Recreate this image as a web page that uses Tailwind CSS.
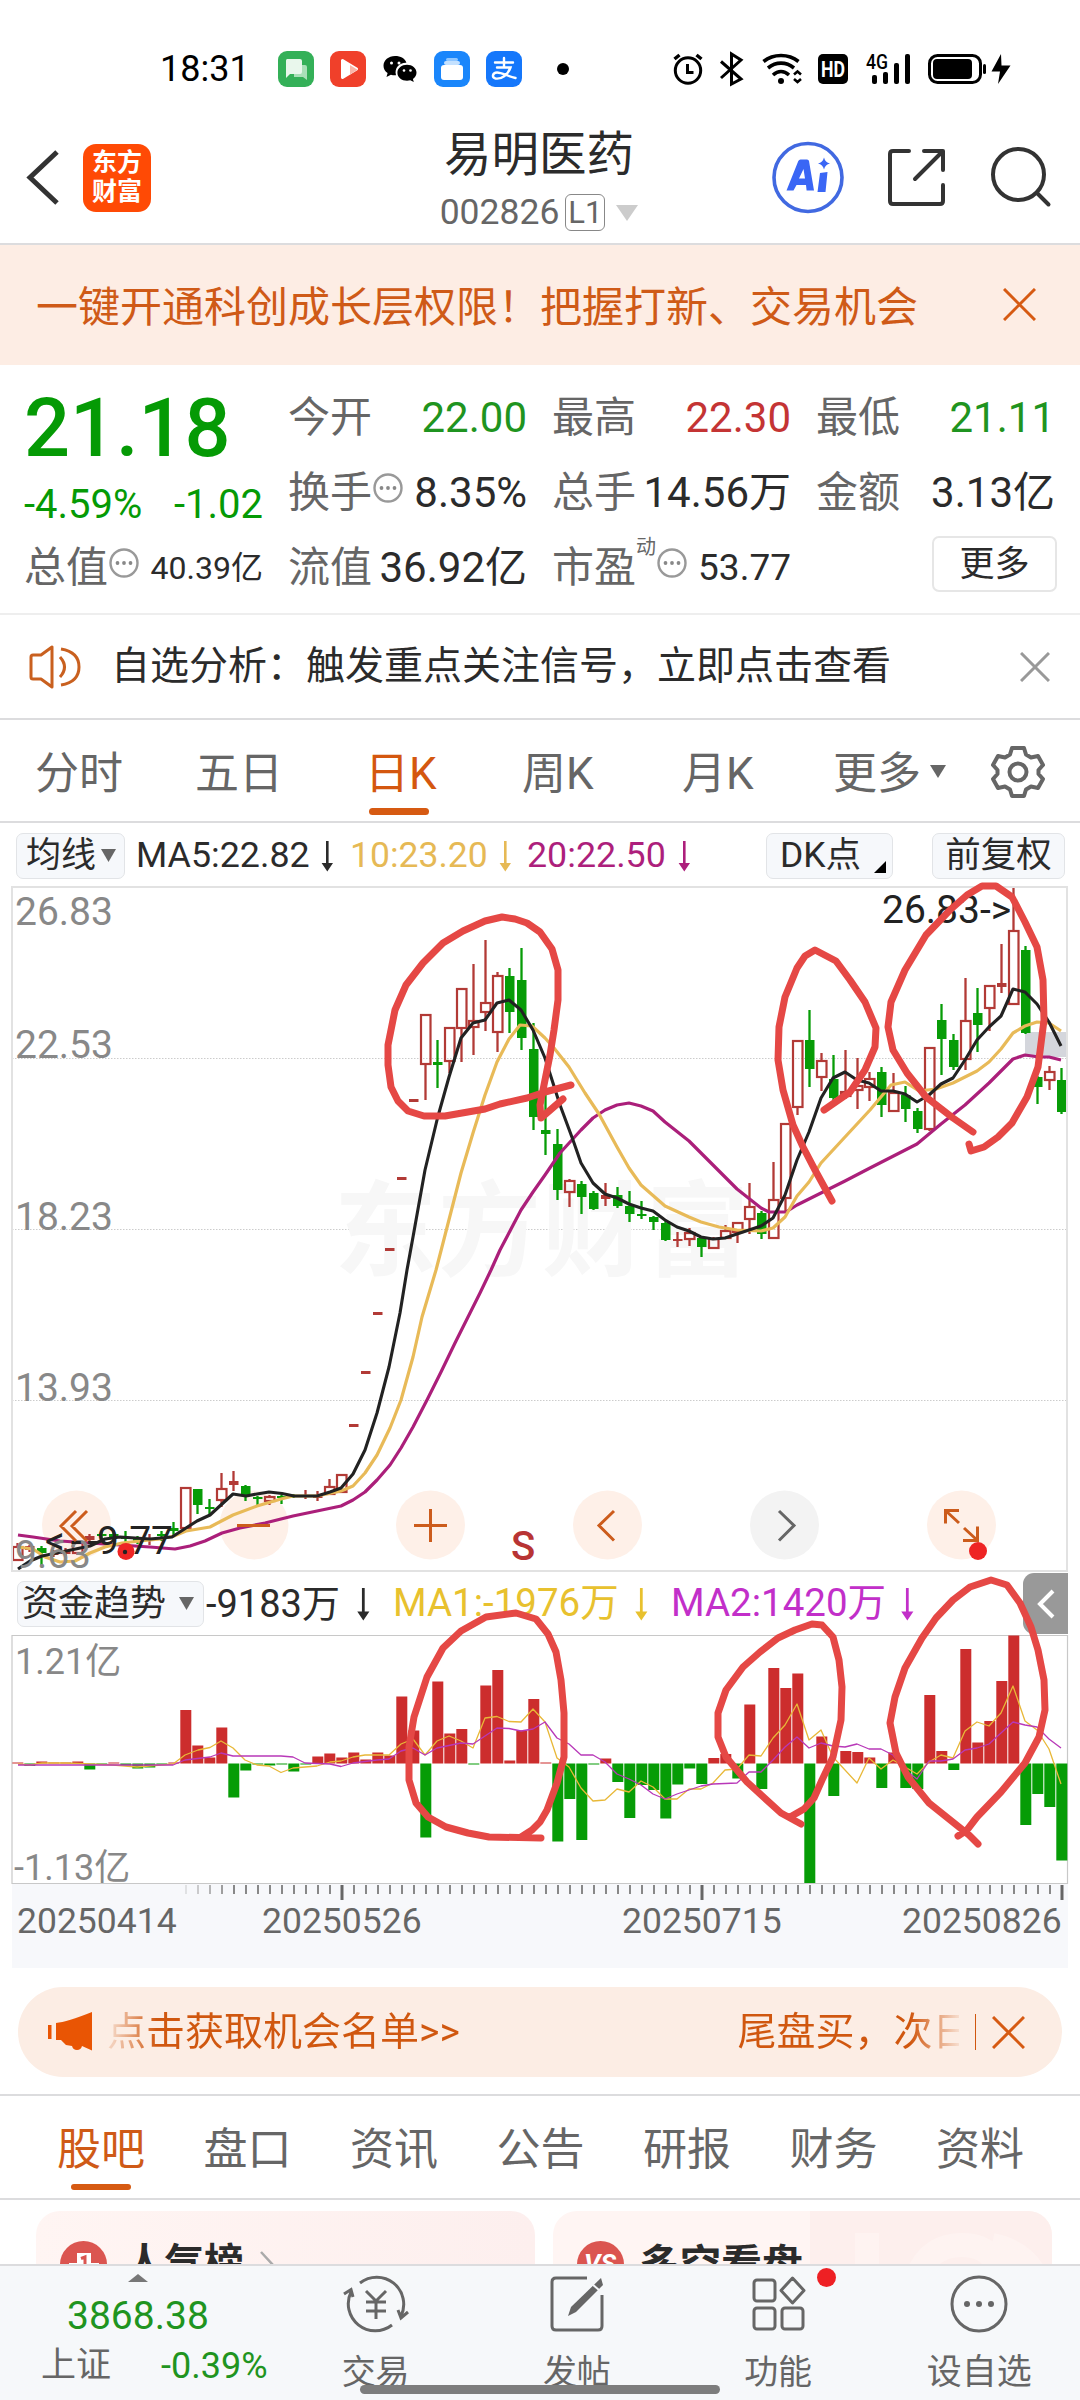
<!DOCTYPE html>
<html lang="zh-CN">
<head>
<meta charset="UTF-8">
<meta name="viewport" content="width=device-width, initial-scale=1.0">
<title>易明医药 002826</title>
<script src="https://cdn.jsdelivr.net/npm/@tailwindcss/browser@4"></script>
</head>
<body class="w-[1080px] h-[2400px] overflow-hidden bg-white font-[Roboto,'Noto_Sans_CJK_SC',sans-serif] text-[#2b2b2b] leading-none">
<div class="w-[1080px] h-[2400px] flex flex-col overflow-hidden whitespace-nowrap">

  <!-- status bar -->
  <div class="h-[138px] shrink-0 flex items-center pl-[160px] text-black">
    <span class="text-[36px] w-[118px]">18:31</span>
    <div class="flex items-center gap-[16px]">
      <svg class="w-9 h-9" viewBox="0 0 36 36"><rect width="36" height="36" rx="9" fill="#34b058"/><path d="M16 14h11a2 2 0 0 1 2 2v13l-4-3h-9z" fill="#a9e0b8"/><path d="M9 8h13a2 2 0 0 1 2 2v11a2 2 0 0 1-2 2H12l-4 4V10a2 2 0 0 1 1-2z" fill="#e9f7ec"/></svg>
      <svg class="w-9 h-9" viewBox="0 0 36 36"><rect width="36" height="36" rx="9" fill="#f0402a"/><path d="M11 9.500v17a1.500 1.500 0 0 0 2.300 1.300l14-8.500a1.500 1.500 0 0 0 0-2.600l-14-8.500A1.500 1.500 0 0 0 11 9.500z" fill="#fff"/><path d="M20 14l7.500 4.700-7.500 4.700z" fill="#f9b5a8"/></svg>
      <svg class="w-9 h-9" viewBox="0 0 36 36"><path d="M13 5C6.500 5 1.500 9.300 1.500 14.700c0 3 1.600 5.600 4.100 7.400L4.500 26l4.400-2.300c1.300.4 2.700.6 4.100.6h1c-2-8 4-13 10.400-12.600C23.300 7.700 18.700 5 13 5z"/><path d="M34.500 21.800c0-4.600-4.300-8-9.500-8s-9.600 3.400-9.600 8 4.300 8 9.600 8c1.200 0 2.300-.2 3.300-.5L31.800 31l-.9-3c2.200-1.500 3.600-3.700 3.600-6.200z"/><g fill="#fff"><circle cx="9.500" cy="12" r="1.500"/><circle cx="17" cy="12" r="1.500"/><circle cx="22" cy="19.500" r="1.300"/><circle cx="28.500" cy="19.500" r="1.300"/></g></svg>
      <svg class="w-9 h-9" viewBox="0 0 36 36"><rect width="36" height="36" rx="9" fill="#1a86fb"/><rect x="12" y="7" width="12" height="3" rx="1.500" fill="#8fc6ff"/><rect x="10" y="10" width="16" height="4" rx="2" fill="#c4e1ff"/><rect x="7" y="14" width="22" height="15" rx="3" fill="#fff"/></svg>
      <svg class="w-9 h-9" viewBox="0 0 36 36"><rect width="36" height="36" rx="9" fill="#1577fb"/><g fill="none" stroke="#fff" stroke-width="2.400" stroke-linecap="round"><path d="M9 11.500h18M18 7v9M11 16.500h13.500C22 24 15 28.500 9.500 27.500c-4-1-3-6 1.500-6 5 0 11 4 18.500 5.500"/></g></svg>
      <svg class="ml-[3px] w-9 h-9" viewBox="0 0 36 36"><circle cx="22" cy="18" r="6"/></svg>
    </div>
    <svg class="ml-[93px] w-[350px] h-[40px]" viewBox="670 49 350 40">
      <g fill="none" stroke="#000">
        <circle cx="688" cy="70.500" r="12.700" stroke-width="3"/>
        <path d="M687.500 64v8.500h6" stroke-width="3"/>
        <path d="M674.500 59l5-4M696.500 55l5 4" stroke-width="3.500"/>
        <path d="M721 61.500l20 17.500-9.500 5V54l9.500 6-20 18" stroke-width="3"/>
        <path d="M763.500 61.500c10-8 25-8 35 0M768 68c8-6.500 18-6.500 26 0M773 75c5-4.500 11-4.500 16 0" stroke-width="3.600"/>
        <path d="M794 74.500l3.500-3 3.500 3M794 79l3.500 3 3.500-3" stroke-width="2.600"/>
      </g>
      <circle cx="781" cy="81" r="3"/>
      <rect x="818" y="54" width="30" height="30" rx="5"/>
      <text x="833" y="76.500" text-anchor="middle" font-size="22" font-weight="700" textLength="24" lengthAdjust="spacingAndGlyphs" fill="#fff">HD</text>
      <text x="866" y="69" font-size="20" font-weight="500" textLength="22" lengthAdjust="spacingAndGlyphs">4G</text>
      <g><rect x="872" y="75" width="5" height="9" rx="2"/><rect x="883" y="72" width="5" height="12" rx="2"/><rect x="894" y="63" width="5" height="21" rx="2"/><rect x="905" y="54" width="5" height="30" rx="2"/></g>
      <rect x="929.500" y="55.500" width="51" height="27" rx="8" fill="none" stroke="#000" stroke-width="3"/>
      <rect x="933" y="59" width="39" height="20" rx="4"/>
      <rect x="983" y="64" width="3" height="10" rx="1.500"/>
      <path d="M1001 54l-9.500 17.500h8.500l-2 12.500 12.500-18.500h-9z"/>
    </svg>
  </div>

  <!-- title bar -->
  <div class="h-[107px] shrink-0 flex items-start border-b-2 border-[#dcdcde]">
    <svg class="ml-[24px] mt-[10px] w-[40px] h-[58px]" viewBox="0 0 40 58" fill="none" stroke="#333" stroke-width="5"><path d="M33 4L6 29.500 33 55"/></svg>
    <div class="ml-[19px] mt-[6px] w-[68px] h-[68px] rounded-[13px] bg-[#ff4a05] text-white text-[25px] font-bold leading-[29px] text-center pt-[4px]">东方<br>财富</div>
    <div class="ml-[273px] w-[230px] mt-[-6px] flex flex-col items-center">
      <div class="text-[47.500px] leading-[47px]">易明医药</div>
      <div class="mt-[15px] flex items-center text-[35.500px] text-[#666]">
        <span>002826</span>
        <span class="ml-[6px] w-[40px] h-[37px] border-[1.500px] border-[#888] rounded-[6px] text-[31px] leading-[36px] text-center">L1</span>
        <svg class="ml-[11px] w-[22px] h-[16px]" viewBox="0 0 22 16"><path d="M0 0h22L11 16z" fill="#ccc"/></svg>
      </div>
    </div>
    <svg class="ml-[114px] w-[290px] h-[80px]" viewBox="768 138 290 80">
      <circle cx="808" cy="177.500" r="34" fill="none" stroke="#4169e1" stroke-width="3.600"/>
      <path d="M786.500 190.500h7l3-5.500h9.500l.6 5.500h7.400l-5-29.500q-.3-1.500-2-1.500h-6.500q-1.500 0-2.200 1.500zM799 178.500l4.500-9.500 1.500 9.500zM820 173l7.500-1-2 20h-8z" fill="#3a66f5"/>
      <path d="M824 157.500q1.200 4.800 6 6-4.800 1.200-6 6-1.200-4.800-6-6 4.800-1.200 6-6z" fill="#3a66f5"/>
      <g fill="none" stroke="#333" stroke-width="4" stroke-linecap="round" stroke-linejoin="round">
        <path d="M909 151h-16q-3 0-3 3v47q0 3 3 3h47q3 0 3-3v-16M924 151h19v19M942 152l-27 27"/>
        <circle cx="1018.500" cy="174.500" r="25.500"/>
        <path d="M1037 193l11.500 11.500"/>
      </g>
    </svg>
  </div>

  <!-- promo banner -->
  <div class="h-[120px] shrink-0 bg-[#fdede4] flex items-center pl-[36px] pr-[44px] justify-between text-[#cf5a17]">
    <span class="text-[42px] mt-[5px]">一键开通科创成长层权限！把握打新、交易机会</span>
    <svg class="w-[33px] h-[33px] -mt-px" viewBox="0 0 33 33" stroke="#d65a12" stroke-width="3"><path d="M1 1l31 31M32 1L1 32"/></svg>
  </div>

  <!-- quote -->
  <div class="h-[250px] shrink-0 grid grid-cols-4 gap-x-[25px] pl-[24px] pr-[25px] pt-[15px] border-b-2 border-[#eee] text-[42px]">
    <div class="flex flex-col text-[#059a05]">
      <div class="text-[81px] font-medium h-[98px] leading-[98px]">21.18</div>
      <div class="flex justify-between text-[40px] h-[52px] leading-[54px]"><span>-4.59%</span><span>-1.02</span></div>
      <div class="flex items-center h-[75px] text-[#666]"><span>总值</span><svg class="w-[30px] h-[30px] ml-px -mt-[10px]" viewBox="0 0 30 30"><use href="#more"/></svg><span class="ml-auto text-[32px] text-[#2b2b2b]">40.39亿</span></div>
    </div>
    <div class="flex flex-col text-[#666]">
      <div class="flex items-center justify-between h-[75px]"><span>今开</span><span class="text-[#1f9420]">22.00</span></div>
      <div class="flex items-center h-[75px]"><span>换手</span><svg class="w-[30px] h-[30px] ml-px -mt-[10px]" viewBox="0 0 30 30"><use href="#more"/></svg><span class="ml-auto text-[#2b2b2b]">8.35%</span></div>
      <div class="flex items-center justify-between h-[75px]"><span>流值</span><span class="text-[#2b2b2b]">36.92亿</span></div>
    </div>
    <div class="flex flex-col text-[#666]">
      <div class="flex items-center justify-between h-[75px]"><span>最高</span><span class="text-[#c43434]">22.30</span></div>
      <div class="flex items-center justify-between h-[75px]"><span>总手</span><span class="text-[#2b2b2b]">14.56万</span></div>
      <div class="flex items-center h-[75px]"><span>市盈</span><span class="text-[20px] -mt-[42px]">动</span><svg class="w-[30px] h-[30px] ml-px -mt-[10px]" viewBox="0 0 30 30"><use href="#more"/></svg><span class="ml-auto text-[37px] text-[#2b2b2b]">53.77</span></div>
    </div>
    <div class="flex flex-col text-[#666]">
      <div class="flex items-center justify-between h-[75px]"><span>最低</span><span class="text-[#1f9420]">21.11</span></div>
      <div class="flex items-center justify-between h-[75px]"><span>金额</span><span class="text-[#2b2b2b]">3.13亿</span></div>
      <div class="flex items-center justify-end h-[75px]"><span class="w-[125px] h-[56px] -mr-[2px] -mt-[8px] border-2 border-[#e6e6e6] rounded-[7px] text-[35px] leading-[54px] text-center text-[#2b2b2b]">更多</span></div>
    </div>
  </div>
  <svg class="hidden"><defs><g id="more"><circle cx="15" cy="15" r="13.500" fill="none" stroke="#999" stroke-width="2.400"/><g fill="#888"><circle cx="8.500" cy="15" r="1.900"/><circle cx="15" cy="15" r="1.900"/><circle cx="21.500" cy="15" r="1.900"/></g></g></defs></svg>

  <!-- analysis notice -->
  <div class="h-[105px] shrink-0 flex items-center pl-[28px] pr-[30px] border-b-2 border-[#dcdcde]">
    <svg class="w-[54px] h-[44px]" viewBox="0 0 54 44" fill="none" stroke="#c9601f" stroke-width="3" stroke-linejoin="round"><path d="M3 12q0-2 2-2h8L24 2v40l-11-8H5q-2 0-2-2z"/><path d="M32 12q9 10 0 20M33 4q18 3 18 18T33 40"/></svg>
    <span class="ml-[29px] text-[39px]">自选分析：触发重点关注信号，立即点击查看</span>
    <svg class="ml-auto w-[30px] h-[30px]" viewBox="0 0 30 30" stroke="#999" stroke-width="3"><path d="M1 1l28 28M29 1L1 29"/></svg>
  </div>

  <!-- period tabs -->
  <div class="h-[103px] shrink-0 flex items-center pt-[6px] text-[44px] text-[#666] border-b-2 border-[#dcdcde]">
    <span class="ml-[35px] w-[160px]">分时</span>
    <span class="w-[170px]">五日</span>
    <div class="relative w-[157px] text-[#d4570f]">日K<i class="absolute left-[4px] top-[56px] w-[60px] h-[7px] rounded-full bg-[#d65a12]"></i></div>
    <span class="w-[160px]">周K</span>
    <span class="w-[151px]">月K</span>
    <span>更多</span>
    <svg class="ml-[9px] -mt-[4px] w-[16px] h-[13px]" viewBox="0 0 16 13"><path d="M0 0h16L8 13z" fill="#666"/></svg>
    <svg class="ml-[45px] -mt-[4px] w-[54px] h-[54px]" viewBox="-27 -27 54 54" fill="none" stroke="#666" stroke-width="4" stroke-linejoin="round"><circle r="8.500"/><path d="M-6-24H6l2 6.500 5 3 7-1.500 5 9-4.500 5v4l4.500 5-5 9-7-1.500-5 3L6 24H-6l-2-6.500-5-3-7 1.500-5-9 4.500-5V-2l-4.500-5 5-9 7 1.500 5-3z"/></svg>
  </div>

  <!-- charts -->
  <div class="relative h-[1145px] shrink-0">
    <div class="h-[63px] flex items-center text-[35.500px] pt-[2px]">
      <div class="ml-[16px] w-[109px] h-[46px] flex items-center pl-[9px] rounded-[7px] border-[1.500px] border-[#e2e4e7] bg-[#f6f8fb] text-[35px]">均线<svg class="ml-[5px] w-[15px] h-[13px]" viewBox="0 0 15 13"><path d="M0 0h15L7.500 13z" fill="#666"/></svg></div>
      <span class="ml-[11px] mt-px w-[183px] text-[35.800px]">MA5:22.82</span>
      <svg class="w-[16px] h-[32px]" viewBox="0 0 12 32"><use href="#down"/></svg>
      <span class="ml-[15px] mt-px w-[147px] text-[#e6b955]">10:23.20</span>
      <svg class="w-[16px] h-[32px] text-[#e6b955]" viewBox="0 0 12 32"><use href="#down"/></svg>
      <span class="ml-[14px] mt-px w-[149px] text-[35.800px] text-[#ad1f7c]">20:22.50</span>
      <svg class="w-[16px] h-[32px] text-[#ad1f7c]" viewBox="0 0 12 32"><use href="#down"/></svg>
      <div class="ml-[74px] w-[127px] h-[46px] flex items-center pl-[13px] rounded-[7px] border-[1.500px] border-[#e2e4e7] bg-[#f6f8fb]">DK点<svg class="ml-[13px] mt-[22px] w-[12px] h-[12px]" viewBox="0 0 12 12"><path d="M12 0v12H0z"/></svg></div>
      <div class="ml-[39px] w-[133px] h-[46px] flex items-center justify-center rounded-[7px] border-[1.500px] border-[#e2e4e7] bg-[#f6f8fb]">前复权</div>
    </div>
    <svg class="hidden"><defs><path id="down" d="M5 1h2.600v22H12L6.300 31.500.600 23H5z" fill="currentColor"/></defs></svg>

    <svg id="kline" class="block w-[1080px] h-[686px]" viewBox="0 886 1080 686"></svg>

    <div class="h-[63px] flex items-center text-[38px]">
      <div class="ml-[17px] w-[187px] h-[46px] flex items-center pl-[4px] rounded-[7px] border-[1.500px] border-[#e2e4e7] bg-[#f6f8fb] text-[36px]">资金趋势<svg class="ml-[13px] w-[15px] h-[13px]" viewBox="0 0 15 13"><path d="M0 0h15L7.500 13z" fill="#666"/></svg></div>
      <span class="ml-[2px] w-[149px]">-9183万</span>
      <svg class="w-[16px] h-[34px]" viewBox="0 0 12 32"><use href="#down"/></svg>
      <span class="ml-[22px] w-[240px] text-[38.500px] text-[#e8c12e]">MA1:-1976万</span>
      <svg class="w-[16px] h-[34px] text-[#e8c12e]" viewBox="0 0 12 32"><use href="#down"/></svg>
      <span class="ml-[22px] w-[228px] text-[38.500px] text-[#c22fc9]">MA2:1420万</span>
      <svg class="w-[16px] h-[34px] text-[#c22fc9]" viewBox="0 0 12 32"><use href="#down"/></svg>
      <div class="ml-auto mr-[12px] w-[45px] h-[61px] rounded-l-[11px] bg-[#999] flex items-center justify-center"><svg class="w-[18px] h-[30px]" viewBox="0 0 18 30" fill="none" stroke="#fff" stroke-width="4"><path d="M16 2L3 15l13 13"/></svg></div>
    </div>

    <svg id="fund" class="block w-[1080px] h-[249px]" viewBox="0 1635 1080 249"></svg>

    <div class="mx-[12px] h-[84px] bg-[#f7f8fb]">
      <svg id="ticks" class="block w-[1056px] h-[18px]" viewBox="12 1884 1056 18"></svg>
      <div class="flex text-[35.500px] text-[#666] pl-[5px] pt-[2px]">
        <span class="w-[245px]">20250414</span><span class="w-[360px]">20250526</span><span class="w-[280px]">20250715</span><span>20250826</span>
      </div>
    </div>
    <svg id="marks" class="absolute left-0 top-0 w-[1080px] h-[1145px]" viewBox="0 823 1080 1145" fill="none" stroke="#e54845" stroke-width="7" stroke-linecap="round" stroke-linejoin="round"></svg>
  </div>

  <!-- opportunity pill -->
  <div class="mx-[18px] mt-[19px] h-[90px] shrink-0 rounded-full bg-[#fcede4] flex items-center pl-[29px] pr-[37px] text-[39px] text-[#d0570f]">
    <svg class="w-[46px] h-[40px]" viewBox="0 0 46 40" fill="#e95504"><path d="M1 13h3.500v14H1zM9 11q11-1 36-11v38.500L35 34q-1 4-5 4t-5-4l-6-1-5-5h-5z"/></svg>
    <span class="ml-[14px] bg-linear-to-r from-[#d0570f]/20 from-2% to-[#d0570f] to-14% bg-clip-text text-transparent leading-[50px]">点击获取机会名单&gt;&gt;</span>
    <div class="ml-auto w-[221px] overflow-hidden bg-linear-to-r from-[#d0570f] from-78% to-[#d0570f]/10 to-100% bg-clip-text text-transparent leading-[50px]">尾盘买，次日</div>
    <i class="ml-[16px] w-[1.500px] h-[36px] bg-[#d0570f]"></i>
    <svg class="ml-[16px] w-[33px] h-[33px]" viewBox="0 0 33 33" stroke="#d65a12" stroke-width="3"><path d="M1 1l31 31M32 1L1 32"/></svg>
  </div>

  <!-- section tabs -->
  <div class="mt-[17px] h-[106px] shrink-0 flex items-center gap-[58.500px] pl-[57px] pt-[5px] border-y-2 border-[#dcdcde] text-[44px] text-[#666]">
    <div class="relative text-[#cf5a17]">股吧<i class="absolute left-[14px] top-[56px] w-[60px] h-[6px] rounded-full bg-[#d65a12]"></i></div>
    <span>盘口</span><span>资讯</span><span>公告</span><span>研报</span><span>财务</span><span>资料</span>
  </div>

  <!-- cards, cut by the bottom bar -->
  <div class="h-[64px] shrink-0 overflow-hidden flex gap-[18px] pl-[36px] pt-[11px] text-[39.500px] font-bold">
    <div class="w-[499px] h-[120px] shrink-0 rounded-[24px] bg-linear-to-r from-[#fff5f3] to-[#fdefee] flex items-start pl-[24px] pt-[30px]">
      <svg class="w-[47px] h-[47px]" viewBox="0 0 47 47"><circle cx="23.500" cy="23.500" r="23.500" fill="#db5550"/><path d="M9 22h8v-10h14v10h8v18H9z" fill="#fff"/><path d="M21 17.500l4-1.500v9" fill="none" stroke="#db5550" stroke-width="3"/></svg>
      <span class="ml-[18px] mt-[3px]">人气榜</span>
      <svg class="ml-[15px] mt-[9px] w-[16px] h-[30px]" viewBox="0 0 16 30" fill="none" stroke="#aaa" stroke-width="2.500"><path d="M2 2l12 13L2 28"/></svg>
    </div>
    <div class="relative w-[499px] h-[120px] shrink-0 rounded-[24px] bg-[#fff5f3] flex items-start overflow-hidden pl-[24px] pt-[30px]">
      <div class="absolute left-[257px] top-0 w-[242px] h-[120px] bg-[#fdefed]"></div>
      <svg class="absolute right-0 top-[22px] w-[200px] h-[60px]" viewBox="0 0 200 60" fill="none" stroke="#fef3f1" stroke-width="24"><path d="M15 60V0M60 60Q70 12 110 12t40 48M190 60Q180 20 140 12"/></svg>
      <svg class="w-[47px] h-[47px]" viewBox="0 0 47 47"><circle cx="23.500" cy="23.500" r="23.500" fill="#db5550"/><text x="23" y="31" text-anchor="middle" font-size="26" font-style="italic" font-weight="700" fill="#fff">VS</text></svg>
      <span class="ml-[15px] mt-[4px] text-[41px]">多空看盘</span>
    </div>
  </div>

  <!-- bottom bar -->
  <div class="relative h-[136px] shrink-0 bg-[#f6f8fa] border-t-2 border-[#dcdcde] flex text-[34px] text-[#666]">
    <div class="w-[275px] shrink-0 flex flex-col pt-[8px]">
      <svg class="ml-[128px] w-[20px] h-[8px]" viewBox="0 0 20 8"><path d="M10 0l10 8H0z" fill="#777"/></svg>
      <span class="ml-[67px] mt-[14px] text-[39px] leading-[40px] text-[#1f9420]">3868.38</span>
      <div class="mt-[10px] flex items-center text-[36px] leading-[40px]"><span class="ml-[41px] w-[120px] text-[35px]">上证</span><span class="text-[#1f9420]">-0.39%</span></div>
    </div>
    <div class="flex-1 flex flex-col items-center pt-[7px]">
      <svg class="w-[66px] h-[62px]" viewBox="-33 -31 66 62" fill="none" stroke="#666" stroke-width="3"><path d="M-16-21A27 27 0 0 1 25 12M16 21A27 27 0 0 1-25-12M-32-10l7-4.500 2 7.500M32 8l-7 6-3-8M-10-13L0-3l10-10M0-3v18M-10-2h20M-10 7h20"/></svg>
      <span class="mt-[20px]">交易</span>
    </div>
    <div class="flex-1 flex flex-col items-center pt-[7px]">
      <svg class="w-[60px] h-[62px]" viewBox="-30 -31 60 62" fill="none" stroke="#666" stroke-width="3"><path d="M10-26h-31q-4 0-4 4V22q0 4 4 4H21q4 0 4-4V-9"/><path d="M24-26L-6 3l-3 9 8-4L26-19z" fill="#666" stroke="none"/><path d="M15-20l7 6" stroke="#f6f8fa" stroke-width="2"/></svg>
      <span class="mt-[20px]">发帖</span>
    </div>
    <div class="relative flex-1 flex flex-col items-center pt-[7px]">
      <svg class="w-[60px] h-[62px]" viewBox="-30 -31 60 62" fill="none" stroke="#666" stroke-width="3"><rect x="-24" y="-24" width="21" height="21" rx="3"/><rect x="-24" y="4" width="21" height="21" rx="3"/><rect x="4" y="4" width="21" height="21" rx="3"/><path d="M14.500-26L26-13.500 14.500-1 3-13.500z" stroke-linejoin="round"/></svg>
      <span class="mt-[20px]">功能</span>
      <i class="absolute left-[139px] top-[2px] w-[19px] h-[19px] rounded-full bg-[#ee2024]"></i>
    </div>
    <div class="flex-1 flex flex-col items-center pt-[7px]">
      <svg class="w-[60px] h-[62px]" viewBox="-30 -31 60 62"><circle r="27" fill="none" stroke="#666" stroke-width="3"/><g fill="#666"><circle cx="-12" r="3"/><circle r="3"/><circle cx="12" r="3"/></g></svg>
      <span class="mt-[20px] text-[35px]">设自选</span>
    </div>
    <i class="absolute left-[360px] top-[119px] w-[360px] h-[9px] rounded-full bg-[#7d7d7d]"></i>
  </div>
</div>

<script>
const RED = '#b23a36', GREEN = '#079c07';
const px = i => 17.5 + 12 * i;

// [up, high, top, bottom, low]
const candles = [
  [1,1543,1546,1560,1561],[1,1545,1546,1550,1552],[0,1546,1548,1553,1565],[1,1550,1553,1555,1557],[1,1548,1550,1554,1556],
  [1,1540,1542,1553,1555],[1,1534,1536,1540,1543],[0,1532,1534,1536,1539],[0,1530,1534,1537,1541],[0,1531,1537,1539,1545],
  [0,1536,1539,1540,1544],[1,1534,1539,1541,1545],[0,1531,1534,1536,1541],[0,1522,1528,1531,1535],[1,1487,1487,1528,1528],
  [0,1489,1489,1505,1514],[0,1499,1507,1509,1514],[1,1473,1488,1500,1507],[1,1471,1481,1485,1491],[0,1485,1486,1495,1501],
  [0,1496,1497,1499,1505],[1,1495,1496,1501,1505],[0,1495,1496,1498,1504],[0,1494,1495,1497,1498],[1,1490,1495,1497,1499],
  [1,1491,1495,1498,1501],[1,1479,1486,1494,1494],[1,1474,1474,1492,1492],[1,1424,1424,1427,1427],[1,1371,1371,1374,1374],
  [1,1312,1312,1315,1315],[1,1248,1248,1251,1251],[1,1177,1177,1180,1180],[1,1099,1099,1102,1102],[1,1014,1014,1064,1100],
  [0,1040,1062,1065,1088],[1,1027,1027,1061,1073],[1,988,988,1028,1062],[1,964,1020,1027,1055],[1,940,1002,1012,1031],
  [1,972,975,1032,1052],[0,968,976,1012,1033],[0,948,980,1038,1050],[0,1023,1049,1117,1130],[0,1093,1130,1134,1155],
  [0,1129,1144,1190,1200],[1,1179,1180,1192,1207],[0,1181,1184,1197,1214],[0,1191,1193,1209,1210],[1,1183,1195,1199,1206],
  [0,1187,1195,1206,1208],[0,1191,1206,1214,1222],[0,1201,1214,1216,1219],[0,1216,1217,1222,1230],[0,1221,1223,1240,1241],
  [1,1232,1239,1241,1247],[1,1228,1232,1239,1246],[0,1236,1238,1247,1257],[1,1237,1238,1248,1249],[1,1225,1230,1238,1238],
  [1,1222,1222,1232,1243],[1,1183,1206,1219,1234],[0,1211,1213,1234,1239],[1,1162,1199,1238,1238],[1,1123,1123,1198,1211],
  [1,1040,1040,1107,1115],[0,1010,1040,1069,1087],[1,1053,1060,1077,1091],[0,1055,1079,1098,1100],[1,1050,1091,1096,1099],
  [1,1058,1085,1090,1109],[1,1072,1078,1087,1101],[0,1067,1072,1105,1117],[1,1073,1092,1111,1111],[0,1086,1095,1109,1122],
  [0,1108,1111,1129,1133],[1,1047,1047,1129,1131],[0,1004,1020,1039,1075],[0,1034,1040,1067,1070],[1,978,1020,1059,1070],
  [0,988,1013,1025,1052],[1,985,985,1008,1031],[1,944,983,987,993],[1,887,930,1004,1004],[0,946,950,1033,1034],
  [0,1076,1077,1087,1104],[1,1066,1071,1080,1090],[0,1068,1080,1112,1114]
];

const ma5 = '18,1569 30,1561 42,1556 66,1551 90,1546 105,1539 120,1537 150,1539 172,1537 186,1528 197,1521 210,1515 222,1504 233,1494 246,1496 257,1494 269,1492 282,1493.5 294,1496 317,1496 330,1492 341,1488 353,1474 365,1450 377,1413 389,1367 400,1313 407,1270 413,1237 425,1170 437.500,1118 449,1077 461,1038 473,1023 485,1020 497,1003 509,1000 521,1010 533,1030 545,1058 560,1105 573,1140 581,1163 593,1183 605,1194 617,1198 629,1204 641,1208 653,1211 665,1220 677,1227 689,1231 701,1237 713,1239 725,1238 737,1234 749,1230 761,1226 773,1218 785,1195 797,1160 809,1132 821,1098 833,1078 845,1072 857,1080 869,1083 881,1091 893,1091 905,1094 917,1102 929,1095 941,1084 953,1078 965,1060 977,1040 989,1027 1001,1016 1013,989 1025,992 1037,1004 1049,1022 1061,1046';
const ma10 = '18,1547 33,1549 45,1557 60,1562 75,1561 90,1553 105,1547 122,1543 140,1541 160,1539 174,1536 186,1531 210,1527 233,1515 257,1506 281,1499 293,1496 317,1496 341,1491 353,1486 365,1473 377,1455 390,1428 401,1400 413,1357 422,1317 436,1270 443,1243 461,1173 473,1133 485,1095 497,1062 509,1039 520,1025 532,1026 545,1038 554,1048 569,1067 585,1093 599,1114 617,1147 629,1168 641,1185 665,1206 689,1217 701,1222 719,1227 737,1230 761,1231 773,1228 785,1217 797,1196 809,1182 821,1163 845,1137 870,1110 891,1085 905,1082 919,1091 936,1089 953,1083 977,1071 989,1062 1001,1049 1013,1033 1025,1026 1037,1022 1049,1023 1061,1031';
const ma20 = '18,1535 33,1537 60,1541 90,1543 120,1545 150,1547 175,1549 190,1546 205,1541 222,1533 240,1528 265,1523 293,1516 317,1511 341,1506 353,1500 365,1492 377,1480 390,1465 401,1448 413,1427 427,1400 441,1372 455,1343 469,1315 480,1293 491,1270 500,1250 521,1210 533,1192 545,1175 560,1153 581,1130 593,1118 605,1110 617,1105 629,1103 641,1106 653,1111 665,1122 689,1141 713,1165 737,1189 761,1208 769,1212 786,1212 797,1205 821,1193 845,1181 870,1168 917,1144 941,1124 965,1105 989,1083 1013,1059 1025,1055 1039,1057 1049,1057 1061,1060';

const line = (points, color, w) => `<polyline points="${points}" fill="none" stroke="${color}" stroke-width="${w}" stroke-linejoin="round"/>`;

let k = '';
[1058.5, 1229.5, 1400.5].forEach(y => {
  k += `<path d="M12 ${y}H1067" stroke="#ccc" stroke-width="1" stroke-dasharray="1.500 1.500"/>`;
});
k += `<text x="334" y="1268" font-size="103" font-weight="700" textLength="415" fill="#f7f7f7">东方财富</text>`;
[76.5, 254, 430.5, 607.5, 784.5, 961.5].forEach((x, i) => {
  k += `<circle cx="${x}" cy="1525" r="34.500" fill="${i === 4 ? '#f3f3f3' : '#fef0e8'}"/>`;
});
k += `<rect x="1025" y="1032" width="42" height="25" fill="#d4d6dc"/>`;
candles.forEach(([up, high, top, bottom, low], i) => {
  const x = px(i), c = up ? RED : GREEN;
  if (high < top) k += `<path d="M${x} ${high}V${top}" stroke="${c}" stroke-width="2.300"/>`;
  if (low > bottom) k += `<path d="M${x} ${bottom}V${low}" stroke="${c}" stroke-width="2.300"/>`;
  if (up && bottom - top > 4) k += `<rect x="${x - 4.5}" y="${top + 1}" width="9.500" height="${bottom - top - 1}" fill="none" stroke="${c}" stroke-width="2.200"/>`;
  else k += `<rect x="${x - 4.5}" y="${top}" width="9.500" height="${Math.max(2, bottom - top)}" fill="${c}"/>`;
});
k += line(ma20, '#ab1f7a', 3.2) + line(ma10, '#e8ba58', 3.2) + line(ma5, '#222', 3.1);
k += `<g font-size="39" fill="#888"><text x="15" y="925">26.83</text><text x="15" y="1058">22.53</text><text x="15" y="1230">18.23</text><text x="15" y="1401">13.93</text><text x="15" y="1568">9.63</text></g>`;
k += `<g font-size="39" fill="#222"><text x="882" y="923">26.83-&gt;</text><text x="45" y="1554" textLength="53">&lt;--</text><text x="97" y="1554">9.77</text></g>`;
k += `<g fill="none" stroke="#cc5c1c" stroke-width="3"><path d="M76 1511l-15 15 15 15M87 1511l-15 15 15 15M237 1525.500h33M414 1525.500h33M430.500 1509v33M614 1511l-15 14.500 15 15"/><path d="M779 1511l15 14.500-15 15" stroke="#666"/><path d="M959 1510.500h-13.500v13M946 1511l13 12M963 1540.500h14.500v-14M977 1540l-13-12"/></g>`;
k += `<circle cx="126" cy="1551.500" r="8.500" fill="#ee2424"/><circle cx="125" cy="1552" r="2.200" fill="#222"/><circle cx="978" cy="1551" r="9" fill="#ee2424"/>`;
k += `<text x="511" y="1560" font-size="40" font-weight="500" fill="#b83434">S</text>`;
k += `<path d="M12 887H1067V1571H12z" fill="none" stroke="#e2e2e2" stroke-width="2"/>`;
document.getElementById('kline').innerHTML = k;

// net capital flow, bar height in px, above zero is inflow
const flow = [1,-2.5,2,1,1,2,-6,-1,1,-2,-5,-4,-1,1,53.5,18,6,36,-34,-7,-1,-2,-1,-8,-1,7,10,6,11,4,11,8,67,33,-74,82,30,34.5,-1,78,93.5,3,33,64.5,1,-78,-35.5,-76.5,-1,5,-18.5,-54.5,-21.5,-26.5,-55,-21,-5,-20.5,5.5,9.5,-15,59,-25.5,95.5,75.5,90,-119.5,27,-32.5,12.5,11.5,6,-24.5,11,-24.5,-25.5,68.5,12.5,-6.5,114.5,21,42.5,82.5,128,-61.5,-30.5,-43.5,-97];
const flowMa1 = '18,1764 30,1765 42,1763 66,1763 90,1764 113,1765 137,1767 173,1764 185,1755 198,1750 210,1747.5 221,1741 233,1748 245,1760 257,1765 269,1766 281,1772.5 293,1768 317,1766 330,1762 341,1761 353,1757 365,1755 389,1755 401,1744 413,1739 425,1755 437,1741 449,1736 461,1741 473,1748 485,1718 497,1716.5 509,1721.5 521,1722 533,1709 545,1722 557,1758 569,1767 581,1788 593,1801 605,1800 617,1789 629,1792 641,1781 653,1787 665,1799 677,1799 689,1789 701,1789 713,1783 725,1770 737,1769 749,1755 761,1756 773,1738 785,1725 797,1704 809,1740 821,1730 833,1757 857,1783 869,1758 881,1769 893,1760 905,1767 917,1774 929,1762 941,1755 953,1758 965,1731 977,1722 989,1726 1001,1713 1013,1686 1025,1721 1037,1730 1049,1749 1061,1784';
const flowMa2 = '18,1765 173,1765 185,1760 210,1757 221,1753 233,1756 281,1756 293,1757 305,1763 330,1764 341,1766.5 353,1763 377,1760 389,1759 401,1751 413,1748 425,1755 437,1748 461,1743 473,1744 497,1728 509,1728.5 521,1731 533,1729 545,1722 557,1738 569,1744 581,1755 593,1755 605,1762 617,1774 629,1779 641,1785 653,1794 665,1799 677,1794 701,1786 713,1784 737,1783 749,1772 761,1772 773,1760 785,1747 797,1737 809,1748 821,1743 833,1746 845,1747 857,1744 869,1749 881,1749 893,1755 905,1770 917,1779 929,1761 941,1761 953,1759 965,1750 977,1748 989,1744 1001,1733 1013,1722 1025,1725 1037,1727 1049,1739 1061,1748';

let f = `<path d="M12 1635.500H1067.500V1883.500H12z" fill="none" stroke="#c8c8c8" stroke-width="1.200"/>`;
flow.forEach((v, i) => {
  f += `<rect x="${px(i) - 5.2}" y="${v > 0 ? 1763.5 - v : 1763.5}" width="11" height="${Math.abs(v)}" fill="${v > 0 ? '#cc2d2d' : '#069c06'}"/>`;
});
f += line(flowMa1, '#e8b838', 1.3) + line(flowMa2, '#b838b8', 1.3);
f += `<g font-size="36" fill="#888"><text x="15" y="1674">1.21亿</text><text x="14" y="1880">-1.13亿</text></g>`;
document.getElementById('fund').innerHTML = f;

let t = '';
for (let i = 14; i < 88; i++) {
  const major = i === 27 || i === 57 || i === 87;
  t += `<path d="M${px(i) + 0.5} 1885V${major ? 1900 : 1894}" stroke="${major ? '#666' : '#888'}" stroke-width="${major ? 3 : 2}" opacity="${i < 18 ? (i - 13) / 5 : 1}"/>`;
}
document.getElementById('ticks').innerHTML = t;

// freehand circles
const marks = [
  '571,1085 545,1092 527,1098 500,1104 485,1109 445,1116 424,1116 408,1111 398,1101 391,1087 388,1065 388,1045 395,1010 406,985 423,963 443,943 463,931 485,921 502,917 515,919 527,923 540,932 552,949 558,970 558,1000 554,1030 550,1055 545,1080 540,1105 541,1118 563,1099',
  '832,1201 815,1170 803,1147 793,1125 783,1090 778,1060 779,1027 785,997 797,968 805,956 815,950 836,961 850,980 865,1002 876,1028 875,1047 865,1070 850,1092 824,1110',
  '973,1132 953,1118 926,1097 907,1073 893,1050 888,1027 891,1002 905,970 926,935 950,910 967,895 982,886 996,886 1012,897 1025,922 1037,947 1043,980 1044,1020 1038,1067 1027,1097 1012,1123 998,1137 984,1147 971,1151 969,1144',
  '541,1838 489,1837 468,1833 446,1827 428,1817 416,1803 409,1780 409,1747 414,1717 427,1677 443,1648 461,1631 486,1617 516,1613 536,1619 548,1634 556,1652 561,1680 564,1713 564,1757 557,1783 547,1810 540,1822 532,1830 521,1837',
  '801,1824 781,1813 747,1782 726,1757 718,1737 718,1713 726,1690 743,1667 760,1652 778,1638 795,1630 812,1624 822,1625 833,1637 839,1660 842,1687 841,1720 833,1757 822,1780 814,1798 804,1809 790,1817',
  '978,1844 969,1835 929,1803 908,1777 896,1753 890,1723 895,1697 905,1668 922,1638 936,1618 953,1600 970,1587 991,1580 1007,1585 1020,1603 1031,1627 1038,1650 1044,1680 1045,1710 1039,1737 1025,1763 1001,1792 977,1817 967,1830 958,1836'
];
document.getElementById('marks').innerHTML = marks.map(p => `<polyline points="${p}"/>`).join('');
</script>
</body>
</html>
